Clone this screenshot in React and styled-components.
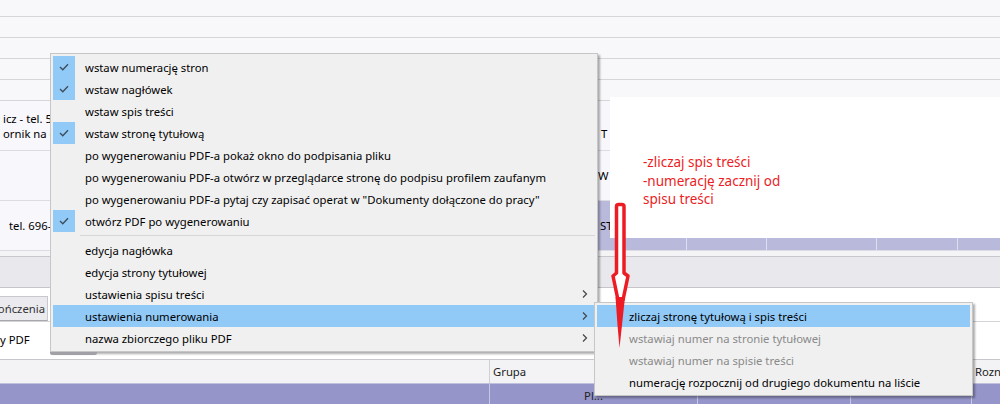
import styled, { createGlobalStyle } from "styled-components";

const GlobalStyle = createGlobalStyle`
  html, body { margin: 0; padding: 0; background: #fff; }
  body { font-family: "Noto Sans", "Liberation Sans", sans-serif; }
`;

const Screen = styled.div`
  position: relative;
  width: 1000px;
  height: 404px;
  overflow: hidden;
  background: #f8f8fa;
  font-size: 11.3px;
  color: #000;
`;

// background window (table behind the menus)
const Strip = styled.div`
  height: ${p => p.$h}px;
  border-bottom: 1px solid #d6d6da;
  background: #f8f8fa;
`;

const TableRow = styled.div`
  display: grid;
  grid-template-columns: 597px 89px 80px 110px 81px 1fr;
  height: 49px;
  border-bottom: 1px solid #dcdce2;
  background: #f8f7fc;
`;

const Cell = styled.div`
  display: flex;
  flex-direction: column;
  justify-content: center;
  padding-left: ${p => p.$pad || 3}px;
  line-height: 15px;
  white-space: nowrap;
  overflow: hidden;
  background: ${p => (p.$sel ? "#b9b9dc" : "transparent")};
  border-left: ${p => (p.$sel ? "1px solid #dedeee" : "none")};
  padding-top: ${p => p.$top || 0}px;
`;

// the part of a cell that is not hidden by the menu
const Peek = styled.span`
  display: block;
  width: ${p => p.$w}px;
  overflow: hidden;
  margin-left: ${p => p.$shift || 0}px;
`;

const Spacer = styled.div`
  height: 5px;
  background: #f4f4f6;
  border-bottom: 1px solid #c8c8cc;
`;

const GrayBand = styled.div`
  height: 30px;
  background: #e9e9ed;
  border-bottom: 1px solid #c6c6ca;
`;

const Panel = styled.div`
  height: 71px;
  background: #fff;
  padding-top: 8px;
  box-sizing: border-box;
`;

const TabStrip = styled.div`
  display: flex;
  height: 26px;
  border-bottom: 1px solid #d4d4d8;
  box-sizing: border-box;
`;

const Tab = styled.div`
  width: 48px;
  display: flex;
  align-items: center;
  justify-content: flex-end;
  padding-right: 2px;
  background: #ebebef;
  border: 1px solid #c9c9cd;
  border-left: none;
  border-bottom-color: #a8a8ac;
  color: #333;
  white-space: nowrap;
  overflow: hidden;
  box-sizing: border-box;
`;

const PanelText = styled.div`
  padding: 10px 0 0 0;
  white-space: nowrap;
`;

const Grid = styled.div`
  display: grid;
  grid-template-columns: 489px 208px 153px 121px 1fr;
  height: ${p => p.$h}px;
  background: ${p => p.$bg};
  border-top: ${p => p.$top || "none"};
`;

const GridCell = styled.div`
  display: flex;
  align-items: center;
  justify-content: ${p => (p.$center ? "center" : "flex-start")};
  padding-left: ${p => (p.$center ? 0 : 3)}px;
  border-left: ${p => (p.$first ? "none" : `1px solid ${p.$line}`)};
  white-space: nowrap;
  overflow: hidden;
  color: #222;
`;

// annotation pasted on top
const Note = styled.div`
  position: absolute;
  left: 610px;
  top: 97px;
  width: 390px;
  height: 141px;
  background: #fff;
  padding: 56px 0 0 33px;
  box-sizing: border-box;
  color: #ed1c24;
  font-size: 13.5px;
  line-height: 18.5px;
`;

const Arrow = styled.svg`
  position: absolute;
  left: 600px;
  top: 190px;
`;

// context menus
const Menu = styled.div`
  position: absolute;
  left: ${p => p.$x}px;
  top: ${p => p.$y}px;
  width: ${p => p.$w}px;
  padding: 2px;
  box-sizing: border-box;
  background: #f0f0f0;
  border: 1px solid #c6c6c6;
  box-shadow: 2px 2px 2px rgba(0, 0, 0, 0.32);
`;

const Item = styled.div`
  display: flex;
  align-items: center;
  height: 22px;
  background: ${p => (p.$active ? "#91c9f7" : "transparent")};
  color: ${p => (p.$disabled ? "#8a8a8a" : "#000")};
  white-space: nowrap;
`;

const IconCell = styled.div`
  width: 22px;
  height: 22px;
  flex: none;
  display: flex;
  align-items: center;
  justify-content: center;
  background: ${p => (p.$checked ? "#91c9f7" : "transparent")};
`;

const Label = styled.span`
  flex: 1;
  margin-left: 10px;
`;

const Chevron = styled.svg`
  margin-right: 7px;
  flex: none;
`;

const Separator = styled.div`
  height: 7px;
  display: flex;
  align-items: center;
  padding-left: 27px;
  &::after {
    content: "";
    flex: 1;
    height: 1px;
    background: #d7d7d7;
  }
`;

const Thumb = styled.div`
  position: absolute;
  left: 50px;
  top: 352px;
  width: 47px;
  height: 3px;
  border-radius: 0 0 2px 2px;
  background: #a0a0a6;
`;

const Check = () => (
  <svg width="12" height="10" viewBox="0 0 12 10">
    <polyline points="2,5 4.8,7.8 10,2.2" fill="none" stroke="#3f4b5a" strokeWidth="1.3" />
  </svg>
);

const More = () => (
  <Chevron width="6" height="10" viewBox="0 0 6 10">
    <polyline points="1,1.5 4.5,5 1,8.5" fill="none" stroke="#444" strokeWidth="1.2" />
  </Chevron>
);

const mainItems = [
  { t: "wstaw numerację stron", c: true },
  { t: "wstaw nagłówek", c: true },
  { t: "wstaw spis treści" },
  { t: "wstaw stronę tytułową", c: true },
  { t: "po wygenerowaniu PDF-a pokaż okno do podpisania pliku" },
  { t: "po wygenerowaniu PDF-a otwórz w przeglądarce stronę do podpisu profilem zaufanym" },
  { t: "po wygenerowaniu PDF-a pytaj czy zapisać operat w \"Dokumenty dołączone do pracy\"" },
  { t: "otwórz PDF po wygenerowaniu", c: true },
  { sep: true },
  { t: "edycja nagłówka" },
  { t: "edycja strony tytułowej" },
  { t: "ustawienia spisu treści", sub: true },
  { t: "ustawienia numerowania", sub: true, active: true },
  { t: "nazwa zbiorczego pliku PDF", sub: true },
];

const subItems = [
  { t: "zliczaj stronę tytułową i spis treści", active: true },
  { t: "wstawiaj numer na stronie tytułowej", off: true },
  { t: "wstawiaj numer na spisie treści", off: true },
  { t: "numerację rozpocznij od drugiego dokumentu na liście" },
];

const App = () => {
  return (
    <Screen>
      <GlobalStyle />
      <Strip $h={16} />
      <Strip $h={20} />
      <Strip $h={20} />
      <Strip $h={20} />
      <Strip $h={20} />

      <TableRow>
        <Cell $pad={0}>
          <Peek $w={50}>icz - tel. 5</Peek>
          <Peek $w={50}>ornik na g</Peek>
        </Cell>
        <Cell $pad={4} $top={16}>T</Cell>
        <Cell />
        <Cell />
        <Cell />
        <Cell />
      </TableRow>
      <TableRow>
        <Cell />
        <Cell $pad={1}>W</Cell>
        <Cell />
        <Cell />
        <Cell />
        <Cell />
      </TableRow>
      <TableRow>
        <Cell $pad={0}>
          <Peek $w={44} $shift={6}>tel. 696-8</Peek>
        </Cell>
        <Cell $sel $pad={2}>ST</Cell>
        <Cell $sel />
        <Cell $sel />
        <Cell $sel />
        <Cell $sel />
      </TableRow>
      <Spacer />
      <GrayBand />
      <Panel>
        <TabStrip>
          <Tab>ończenia</Tab>
        </TabStrip>
        <PanelText>y PDF</PanelText>
      </Panel>
      <Grid $h={23} $bg="#f3f3f5" $top="1px solid #c8c8cc">
        <GridCell $first $line="#d0d0d4" />
        <GridCell $line="#d0d0d4">Grupa</GridCell>
        <GridCell $line="#d0d0d4" />
        <GridCell $line="#d0d0d4" />
        <GridCell $line="#d0d0d4">Rozn</GridCell>
      </Grid>
      <Grid $h={22} $bg="#9595c9" $top="1px solid #c0c0dc">
        <GridCell $first $line="#c8c8e4" />
        <GridCell $center $line="#c8c8e4">Pl...</GridCell>
        <GridCell $line="#c8c8e4" />
        <GridCell $line="#c8c8e4" />
        <GridCell $line="#c8c8e4" />
      </Grid>

      <Note>
        <div>-zliczaj spis treści</div>
        <div>-numerację zacznij od</div>
        <div>spisu treści</div>
      </Note>

      <Menu $x={50} $y={53} $w={548}>
        {mainItems.map((it, i) =>
          it.sep ? (
            <Separator key={i} />
          ) : (
            <Item key={i} $active={it.active}>
              <IconCell $checked={it.c}>{it.c && <Check />}</IconCell>
              <Label>{it.t}</Label>
              {it.sub && <More />}
            </Item>
          )
        )}
      </Menu>
      <Thumb />

      <Menu $x={594} $y={302} $w={379}>
        {subItems.map((it, i) => (
          <Item key={i} $active={it.active} $disabled={it.off}>
            <IconCell />
            <Label>{it.t}</Label>
          </Item>
        ))}
      </Menu>

      <Arrow width="40" height="170" viewBox="600 190 40 170">
        <path
          d="M616.5 273 L616.5 206.5 Q616.5 204.5 618.5 204.5 L622 204.5 Q624 204.5 624 206.5 L624 273 L628 276 L623 300 L618 300 L613 276 Z"
          fill="#fff"
          stroke="#ed1c24"
          strokeWidth="3.5"
          strokeLinejoin="round"
        />
        <path d="M615.5 297 L625 297 L622 325 L619.5 348 L617.5 325 Z" fill="#ed1c24" />
      </Arrow>
    </Screen>
  );
};

export default App;
